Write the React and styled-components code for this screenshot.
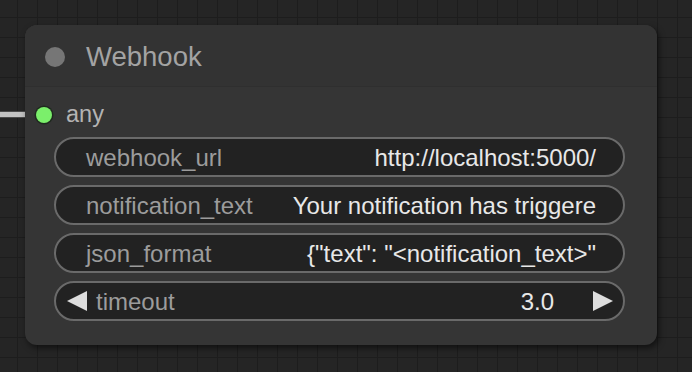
import React from "react";
import styled, { createGlobalStyle } from "styled-components";

const Global = createGlobalStyle`
  html, body { margin: 0; padding: 0; }
  body {
    width: 692px;
    height: 372px;
    overflow: hidden;
    background-color: #252525;
    background-image:
      linear-gradient(to right, #1d1d1d 1px, transparent 1px),
      linear-gradient(to bottom, #1d1d1d 1px, transparent 1px);
    background-size: 20px 20px;
    background-position: 17px 17px;
    font-family: "Liberation Sans", Arial, Helvetica, sans-serif;
  }
`;

const Canvas = styled.div`
  position: relative;
  width: 692px;
  height: 372px;
  padding: 25px 0 0 25px;
  box-sizing: border-box;
`;

const Link = styled.div`
  position: absolute;
  left: 0;
  top: 111px;
  width: 30px;
  height: 5px;
  background: #c2c2c2;
  border-top: 1px solid #4a4a4a;
  border-bottom: 1px solid #4a4a4a;
`;

const Node = styled.div`
  position: relative;
  width: 632px;
  height: 320px;
  background: #353535;
  border-radius: 12px;
  box-shadow: 2px 3px 6px rgba(0, 0, 0, 0.55);
  display: flex;
  flex-direction: column;
  overflow: hidden;
`;

const TitleBar = styled.div`
  height: 62px;
  background: #333333;
  border-bottom: 1px solid #2f2f2f;
  box-sizing: border-box;
  display: flex;
  align-items: center;
  padding: 2px 0 0 20px;
  gap: 21px;
`;

const Dot = styled.div`
  width: ${(p) => p.size}px;
  height: ${(p) => p.size}px;
  border-radius: 50%;
  background: ${(p) => p.color};
  box-shadow: ${(p) => (p.ring ? "0 0 0 1.5px #1f2a1f" : "none")};
  flex: none;
`;

const Title = styled.div`
  font-size: 27.5px;
  color: #a3a3a3;
  line-height: 1;
`;

const Body = styled.div`
  padding: 8px 32px 24px 29px;
  display: flex;
  flex-direction: column;
`;

const SlotRow = styled.div`
  height: 40px;
  display: flex;
  align-items: center;
  margin-left: -18px;
  gap: 14px;
  margin-bottom: 2px;
`;

const SlotLabel = styled.span`
  font-size: 23.5px;
  color: #b3b3b3;
  line-height: 1;
`;

const Widgets = styled.div`
  display: flex;
  flex-direction: column;
  gap: 8px;
`;

const Widget = styled.div`
  height: 40px;
  box-sizing: border-box;
  border: 2px solid #6a6a6a;
  border-radius: 20px;
  background: #222222;
  display: flex;
  align-items: center;
  padding: ${(p) => (p.number ? "2px 10px 0 11px" : "2px 27px 0 30px")};
  font-size: 24px;
  line-height: 1.2;
  white-space: nowrap;
  overflow: hidden;
`;

const Label = styled.span`
  color: #9c9c9c;
  flex: none;
`;

const Value = styled.span`
  color: #e8e8e8;
  margin-left: auto;
  flex: none;
`;

const Arrow = styled.svg`
  width: 20px;
  height: 20px;
  flex: none;
  margin: ${(p) => p.m};
`;

const LeftArrow = () => (
  <Arrow viewBox="0 0 20 20" m="-2px 9px 0 0">
    <polygon points="20,0 20,20 0,10" fill="#dddddd" />
  </Arrow>
);

const RightArrow = () => (
  <Arrow viewBox="0 0 20 20" m="-2px 0 0 39px">
    <polygon points="0,0 0,20 20,10" fill="#dddddd" />
  </Arrow>
);

const textWidgets = [
  { name: "webhook_url", value: "http://localhost:5000/" },
  { name: "notification_text", value: "Your notification has triggere" },
  { name: "json_format", value: '{"text": "<notification_text>"' },
];

export default function App() {
  return (
    <>
      <Global />
      <Canvas>
        <Link />
        <Node>
          <TitleBar>
            <Dot size={20} color="#767676" />
            <Title>Webhook</Title>
          </TitleBar>
          <Body>
            <SlotRow>
              <Dot size={16} color="#7bef6b" ring />
              <SlotLabel>any</SlotLabel>
            </SlotRow>
            <Widgets>
              {textWidgets.map((w) => (
                <Widget key={w.name}>
                  <Label>{w.name}</Label>
                  <Value>{w.value}</Value>
                </Widget>
              ))}
              <Widget number>
                <LeftArrow />
                <Label>timeout</Label>
                <Value>3.0</Value>
                <RightArrow />
              </Widget>
            </Widgets>
          </Body>
        </Node>
      </Canvas>
    </>
  );
}
